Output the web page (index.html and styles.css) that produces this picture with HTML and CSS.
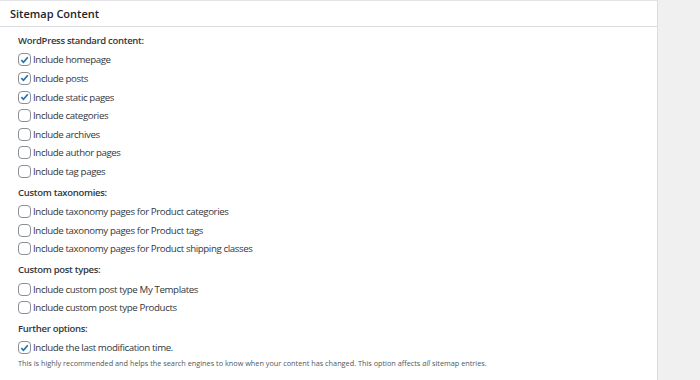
FILE: index.html
```html
<!DOCTYPE html>
<html lang="en">
<head>
  <meta charset="UTF-8" />
  <title>Sitemap Content</title>
  <link rel="stylesheet" href="styles.css">
</head>
<body>
  <div class="panel">
    <h2 class="panel-title">Sitemap Content</h2>

    <div class="panel-body">
      <div class="group">
        <p class="group-label">WordPress standard content:</p>
        <label class="opt"><span class="box on"><svg viewBox="0 0 13 13"><polyline points="2.8,6.6 5.3,9.2 10.4,3.2" /></svg></span>Include homepage</label>
        <label class="opt"><span class="box on"><svg viewBox="0 0 13 13"><polyline points="2.8,6.6 5.3,9.2 10.4,3.2" /></svg></span>Include posts</label>
        <label class="opt"><span class="box on"><svg viewBox="0 0 13 13"><polyline points="2.8,6.6 5.3,9.2 10.4,3.2" /></svg></span>Include static pages</label>
        <label class="opt"><span class="box"></span>Include categories</label>
        <label class="opt"><span class="box"></span>Include archives</label>
        <label class="opt"><span class="box"></span>Include author pages</label>
        <label class="opt"><span class="box"></span>Include tag pages</label>
      </div>

      <div class="group">
        <p class="group-label">Custom taxonomies:</p>
        <label class="opt"><span class="box"></span>Include taxonomy pages for Product categories</label>
        <label class="opt"><span class="box"></span>Include taxonomy pages for Product tags</label>
        <label class="opt"><span class="box"></span>Include taxonomy pages for Product shipping classes</label>
      </div>

      <div class="group">
        <p class="group-label">Custom post types:</p>
        <label class="opt"><span class="box"></span>Include custom post type My Templates</label>
        <label class="opt"><span class="box"></span>Include custom post type Products</label>
      </div>

      <div class="group">
        <p class="group-label">Further options:</p>
        <label class="opt"><span class="box on"><svg viewBox="0 0 13 13"><polyline points="2.8,6.6 5.3,9.2 10.4,3.2" /></svg></span>Include the last modification time.</label>
        <p class="desc">This is highly recommended and helps the search engines to know when your content has changed. This option affects <em>all</em> sitemap entries.</p>
      </div>
    </div>
  </div>
</body>
</html>
```

FILE: styles.css
```css
body {
  margin: 0;
  background: #f0f0f1;
  font-family: 'Open Sans', 'Noto Sans', sans-serif;
  color: #3c434a;
  height: 380px;
  overflow: hidden;
}

.panel {
  width: 658px;
  height: 380px;
  background: #fff;
  border-top: 1px solid #e4e4e6;
  border-right: 1px solid #dcdcde;
  box-sizing: border-box;
}

.panel-title {
  margin: 0;
  height: 25px;
  line-height: 25px;
  padding-left: 10px;
  font-size: 11px;
  font-weight: 600;
  color: #1d2327;
  border-bottom: 1px solid #dcdcde;
}

.panel-body {
  padding: 5px 18px 0;
}

.group {
  margin-bottom: 3px;
}

.group-label {
  margin: 0;
  height: 18.6px;
  line-height: 18.6px;
  font-size: 9.5px;
  font-weight: 600;
  letter-spacing: -0.3px;
  color: #32373c;
}

.opt {
  display: flex;
  align-items: center;
  height: 18.6px;
  font-size: 9.7px;
  letter-spacing: -0.38px;
  color: #32373c;
  gap: 2px;
}

.box {
  width: 13px;
  height: 13px;
  border: 1px solid #8c8f94;
  border-radius: 4px;
  box-sizing: border-box;
  display: flex;
  align-items: center;
  justify-content: center;
  flex-shrink: 0;
}

.box svg {
  width: 12px;
  height: 12px;
  fill: none;
  stroke: #2271b1;
  stroke-width: 2;
}

.desc {
  margin: 0;
  font-size: 7.3px;
  line-height: 12px;
  color: #50575e;
}
```
